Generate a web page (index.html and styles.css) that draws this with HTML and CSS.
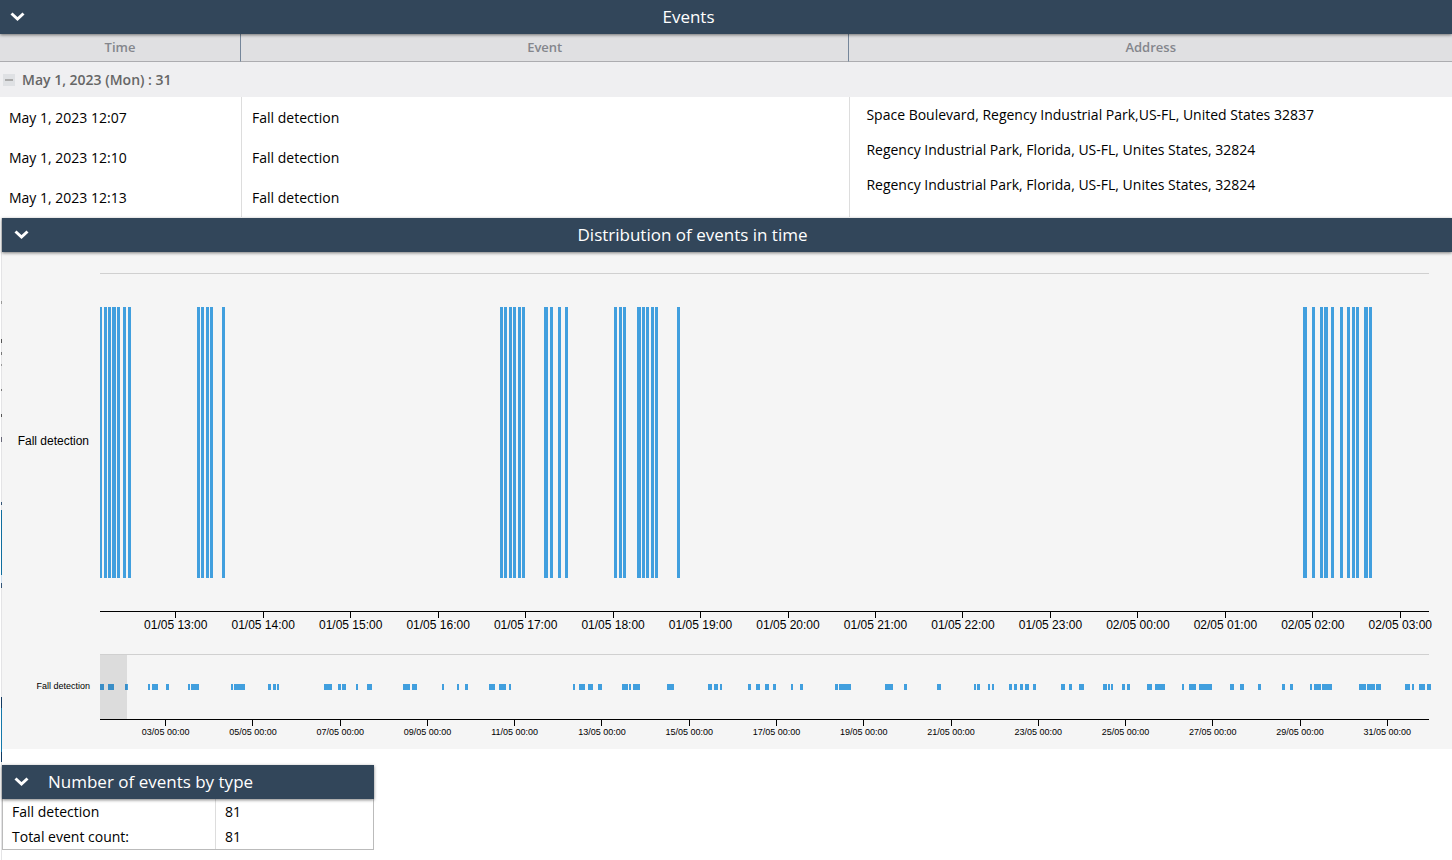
FILE: index.html
```
<!DOCTYPE html>
<html lang="en">
<head>
	<meta charset="utf-8">
	<title>Events</title>
	<link rel="stylesheet" href="styles.css">
</head>
<body>
	<section class="events">
		<div class="bar">
			<button class="toggle" type="button" aria-label="Collapse events"><svg width="15" height="11" viewBox="0 0 15 11"><path d="M1.5 1.5L7.5 7L13.5 1.5"/></svg></button>
			<h2 class="title">Events</h2>
		</div>
		<table class="list">
			<colgroup>
				<col class="col-time">
				<col class="col-event">
				<col>
			</colgroup>
			<thead>
				<tr>
					<th>Time</th>
					<th>Event</th>
					<th>Address</th>
				</tr>
			</thead>
			<tbody>
				<tr class="group">
					<td colspan="3">
						<div class="group-in">
							<button class="minus" type="button" aria-label="Collapse group"></button>
							<span>May 1, 2023 (Mon) : 31</span>
						</div>
					</td>
				</tr>
				<tr class="row">
					<td>May 1, 2023 12:07</td>
					<td>Fall detection</td>
					<td class="address" rowspan="3">
						<p>Space Boulevard, Regency Industrial Park,US-FL, United States 32837</p>
						<p>Regency Industrial Park, Florida, US-FL, Unites States, 32824</p>
						<p>Regency Industrial Park, Florida, US-FL, Unites States, 32824</p>
					</td>
				</tr>
				<tr class="row">
					<td>May 1, 2023 12:10</td>
					<td>Fall detection</td>
				</tr>
				<tr class="row">
					<td>May 1, 2023 12:13</td>
					<td>Fall detection</td>
				</tr>
			</tbody>
		</table>
	</section>

	<div class="lower">
		<section class="distribution">
			<div class="bar">
				<button class="toggle" type="button" aria-label="Collapse distribution"><svg width="15" height="11" viewBox="0 0 15 11"><path d="M1.5 1.5L7.5 7L13.5 1.5"/></svg></button>
				<h2 class="title">Distribution of events in time</h2>
			</div>
			<div class="chart">
				<div class="label">Fall detection</div>
				<div class="plot main">
					<svg id="bars" viewBox="0 0 1329 271" preserveAspectRatio="none"></svg>
				</div>
				<div class="axis hours">
					<span>01/05 13:00</span>
					<span>01/05 14:00</span>
					<span>01/05 15:00</span>
					<span>01/05 16:00</span>
					<span>01/05 17:00</span>
					<span>01/05 18:00</span>
					<span>01/05 19:00</span>
					<span>01/05 20:00</span>
					<span>01/05 21:00</span>
					<span>01/05 22:00</span>
					<span>01/05 23:00</span>
					<span>02/05 00:00</span>
					<span>02/05 01:00</span>
					<span>02/05 02:00</span>
					<span>02/05 03:00</span>
				</div>
				<div class="label small">Fall detection</div>
				<div class="plot overview">
					<svg id="marks" viewBox="0 0 1329 6" preserveAspectRatio="none"></svg>
					<div class="range"></div>
				</div>
				<div class="axis days">
					<span>03/05 00:00</span>
					<span>05/05 00:00</span>
					<span>07/05 00:00</span>
					<span>09/05 00:00</span>
					<span>11/05 00:00</span>
					<span>13/05 00:00</span>
					<span>15/05 00:00</span>
					<span>17/05 00:00</span>
					<span>19/05 00:00</span>
					<span>21/05 00:00</span>
					<span>23/05 00:00</span>
					<span>25/05 00:00</span>
					<span>27/05 00:00</span>
					<span>29/05 00:00</span>
					<span>31/05 00:00</span>
				</div>
			</div>
		</section>

		<section class="totals">
			<div class="bar">
				<button class="toggle" type="button" aria-label="Collapse totals"><svg width="15" height="11" viewBox="0 0 15 11"><path d="M1.5 1.5L7.5 7L13.5 1.5"/></svg></button>
				<h2 class="title">Number of events by type</h2>
			</div>
			<table class="count">
				<tr>
					<td class="name">Fall detection</td>
					<td>81</td>
				</tr>
				<tr>
					<td class="name">Total event count:</td>
					<td>81</td>
				</tr>
			</table>
		</section>
	</div>
	<script src="chart.js"></script>
</body>
</html>
```
FILE: styles.css
```
*{
	padding: 0;
	margin: 0;
	box-sizing: border-box;
}
body{
	font-family: "Open Sans", "Noto Sans", sans-serif;
	font-size: 14px;
	color: #000;
	background: #fff;
}
button{
	border: 0;
	background: none;
	cursor: pointer;
}
table{
	border-collapse: separate;
	border-spacing: 0;
	width: 100%;
}

/* dark section headers */
.bar{
	display: flex;
	align-items: center;
	height: 34px;
	padding: 0 100px 0 10px;
	background: #32465a;
	box-shadow: 0 1px 3px rgba(0,0,0,0.5);
	position: relative;
}
.title{
	flex: 1;
	text-align: center;
	font-size: 17px;
	font-weight: 400;
	line-height: 34px;
	color: #fff;
}
.toggle{
	width: 15px;
	height: 15px;
}
.toggle svg{
	display: block;
}
.toggle path{
	fill: none;
	stroke: #fff;
	stroke-width: 3;
}

/* events table */
.list{
	table-layout: fixed;
}
.col-time{
	width: 16.6%;
}
.col-event{
	width: 41.9%;
}
.list th{
	height: 28px;
	padding-bottom: 2px;
	font-size: 13px;
	font-weight: 600;
	color: #84868c;
	background: #e0e0e2;
	border-right: 1px solid #75869a;
	border-bottom: 1px solid #acacb0;
}
.list th:last-child{
	border-right: 0;
}
.group td{
	height: 35px;
	background: #efeff1;
	font-weight: 600;
	color: #666;
}
.group-in{
	display: flex;
	align-items: center;
	gap: 7px;
	padding-left: 3px;
}
.minus{
	width: 12px;
	height: 12px;
	padding: 0 2px;
	background: #dfe1e4;
}
.minus::before{
	content: "";
	display: block;
	height: 2px;
	background: #aaa;
}
.row td{
	height: 40px;
	padding-left: 9px;
}
.row td + td{
	padding-left: 10px;
	border-left: 1px solid #ddd;
}
.row .address{
	padding-left: 16px;
	vertical-align: top;
}
.address p{
	line-height: 35px;
}

/* 1px edge of the map panel stays visible on the left */
.lower{
	margin-top: 1px;
	padding: 0 0 10px 2px;
	background: linear-gradient(#e4e4e6 83px, #999 83px, #999 86px, #e4e4e6 86px, #e4e4e6 121px, #555 121px, #555 125px, #e4e4e6 125px, #e4e4e6 134px, #777 134px, #777 137px, #e4e4e6 137px, #e4e4e6 146px, #999 146px, #999 148px, #e4e4e6 148px, #e4e4e6 171px, #777 171px, #777 173px, #e4e4e6 173px, #e4e4e6 196px, #555 196px, #555 199px, #e4e4e6 199px, #e4e4e6 219px, #667 219px, #667 224px, #e4e4e6 224px, #e4e4e6 284px, #357 284px, #357 287px, #e4e4e6 287px, #e4e4e6 292px, #0f6e9f 292px, #0f6e9f 357px, #cde 357px, #cde 365px, #357 365px, #357 370px, #e4e4e6 370px, #e4e4e6 479px, #123a62 479px, #123a62 490px, #1478aa 490px, #1478aa 534px, #123a62 534px, #123a62 544px, #e4e4e6 544px) 1px 0 / 1px 100% no-repeat;
}
.lower .bar{
	padding: 0 96px 0 12px;
}

/* charts */
.chart{
	display: grid;
	grid-template-columns: 98px 1fr;
	padding: 21px 23px 0 0;
	background: #f5f5f5;
	font-family: "Liberation Sans", Arial, sans-serif;
	font-size: 12px;
}
.label{
	align-self: center;
	padding: 0 11px 4px 0;
	text-align: right;
}
.small{
	padding: 0 10px 2px 0;
	font-size: 9px;
}
.plot{
	position: relative;
	border-top: 1px solid #d0d0d0;
	border-bottom: 1px solid #000;
}
.plot svg{
	display: block;
	width: 100%;
	overflow: visible;
	fill: #419fde;
	shape-rendering: crispEdges;
}
.main{
	padding: 33px 0;
}
.main svg{
	height: 271px;
}
.overview{
	padding: 29px 0;
}
.overview svg{
	height: 6px;
}
.range{
	position: absolute;
	top: 0;
	bottom: 0;
	left: 0;
	width: 2%;
	background: rgba(0,0,0,0.1);
}
.axis{
	grid-column: 2;
	display: flex;
}
.axis span{
	flex: 1;
	text-align: center;
	white-space: nowrap;
}
.axis span::before{
	content: "";
	display: block;
	width: 1px;
	height: 6px;
	margin: 0 auto;
	background: #000;
}
.hours{
	height: 42px;
	padding-left: 32px;
	margin-right: -15px;
	line-height: 15px;
}
.days{
	height: 29px;
	padding-left: 22px;
	margin-right: -2px;
	font-size: 9px;
	line-height: 12px;
}

/* totals */
.totals{
	width: 372px;
	margin-top: 16px;
}
.totals .title{
	padding-left: 19px;
	text-align: left;
}
.totals .bar{
	padding-right: 0;
}
.count{
	border: 1px solid #bbb;
	border-top: 0;
}
.count td{
	height: 25px;
	padding-left: 9px;
}
.count .name{
	width: 213px;
	border-right: 1px solid #ddd;
}
```
FILE: chart.js
```
// [x, width] of every event on the time scale
var bars = [
	[0,2],[4,3],[8,3],[12,4],[17,3],[23,3],[28,3],
	[97,3],[101,3],[106,3],[110,3],[122,3],
	[400,3],[404,3],[409,3],[413,3],[418,3],[422,3],
	[444,4],[450,3],[458,3],[465,3],
	[514,3],[519,3],[523,3],[537,4],[542,3],[546,3],[551,3],[555,3],[577,3],
	[1203,4],[1212,3],[1220,3],[1224,4],[1231,3],[1240,3],[1247,3],[1252,3],[1256,3],[1264,4],[1269,3]
];
var marks = [
	[0,4],[8,6],[25,3],[48,2],[52,6],[66,3],[88,2],[91,8],[131,2],[134,11],
	[168,3],[173,3],[177,2],[224,8],[238,3],[242,4],[256,2],[267,5],[303,7],[312,5],
	[342,2],[357,2],[365,3],[389,6],[399,7],[409,2],[473,2],[479,6],[488,5],[498,4],
	[522,6],[529,2],[533,7],[567,7],[608,4],[614,4],[620,2],[648,3],[656,4],[665,4],
	[673,3],[691,2],[700,3],[735,3],[739,12],[785,8],[804,3],[837,4],[874,2],[877,3],
	[888,2],[892,2],[909,3],[914,3],[920,3],[925,4],[933,3],[961,4],[969,3],[979,5],
	[1003,4],[1008,2],[1011,2],[1022,3],[1027,3],[1047,5],[1055,10],[1082,2],[1089,7],[1099,13],
	[1130,4],[1140,4],[1158,3],[1182,3],[1190,3],[1210,2],[1214,7],[1222,10],[1259,7],[1267,8],
	[1276,5],[1305,5],[1312,2],[1319,6],[1327,4]
];
function draw(id, data, height){
	var svg = document.getElementById(id);
	for (var i = 0; i < data.length; i++) {
		var rect = document.createElementNS('http://www.w3.org/2000/svg', 'rect');
		rect.setAttribute('x', data[i][0]);
		rect.setAttribute('width', data[i][1]);
		rect.setAttribute('height', height);
		svg.appendChild(rect);
	}
}
draw('bars', bars, 271);
draw('marks', marks, 6);
```
